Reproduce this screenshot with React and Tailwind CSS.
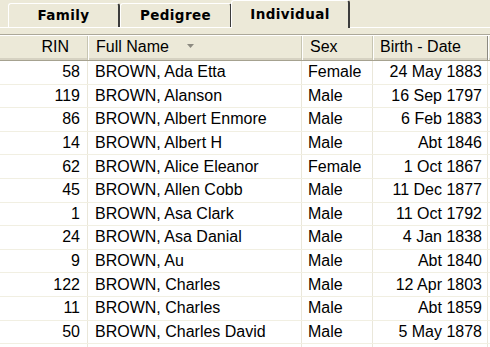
const rows = [
  ['58', 'BROWN, Ada Etta', 'Female', '24 May 1883'],
  ['119', 'BROWN, Alanson', 'Male', '16 Sep 1797'],
  ['86', 'BROWN, Albert Enmore', 'Male', '6 Feb 1883'],
  ['14', 'BROWN, Albert H', 'Male', 'Abt 1846'],
  ['62', 'BROWN, Alice Eleanor', 'Female', '1 Oct 1867'],
  ['45', 'BROWN, Allen Cobb', 'Male', '11 Dec 1877'],
  ['1', 'BROWN, Asa Clark', 'Male', '11 Oct 1792'],
  ['24', 'BROWN, Asa Danial', 'Male', '4 Jan 1838'],
  ['9', 'BROWN, Au', 'Male', 'Abt 1840'],
  ['122', 'BROWN, Charles', 'Male', '12 Apr 1803'],
  ['11', 'BROWN, Charles', 'Male', 'Abt 1859'],
  ['50', 'BROWN, Charles David', 'Male', '5 May 1878'],
  ['', '', '', ''],
]

function Tab({ label, active }) {
  if (active) {
    return (
      <div className="relative z-10 -ml-[1px] flex h-[28px] w-[119px] items-center justify-center rounded-t-[3px] border-l border-t border-white border-r-2 border-r-[#3c3c3c] bg-[#ECE9D8] pb-[1px]">
        {label}
      </div>
    )
  }
  return (
    <div className="flex h-[24px] w-[112px] items-center justify-center rounded-t-[3px] border-l border-t border-white border-r-2 border-r-[#3c3c3c] bg-[#ECE9D8]">
      {label}
    </div>
  )
}

export default function App() {
  return (
    <div className="h-[347px] w-[490px] overflow-hidden bg-white font-['Liberation_Sans',Arial,sans-serif] text-[16px] text-black">
      {/* tab strip */}
      <div className="relative h-[34px] bg-[#ECE9D8]">
        <div className="absolute left-0 right-0 top-[27px] h-px bg-white" />
        <div className="flex items-start pl-[8px] font-['DejaVu_Sans',sans-serif] text-[13.5px] font-bold tracking-[0.4px]">
          <div className="mt-[3px] flex">
            <Tab label="Family" />
            <Tab label="Pedigree" />
          </div>
          <Tab label="Individual" active />
        </div>
      </div>

      {/* list */}
      <div className="border-t border-[#ACA899]">
        <div className="flex h-[26px] border-b border-[#A6A290] border-t border-t-white bg-[#ECE9D8] shadow-[inset_0_-2px_0_#D6D2C2]">
          <div className="flex w-[88px] items-center justify-end border-r border-[#C7C5B2] pr-[18px] pb-[2px]">RIN</div>
          <div className="relative flex w-[214px] items-center border-l border-white border-r border-r-[#C7C5B2] pl-[7px] pb-[2px]">
            Full Name
            <svg className="absolute left-[98px] top-[8px]" width="7" height="4" viewBox="0 0 7 4">
              <path d="M0 0h7L3.5 4z" fill="#8c8a80" />
            </svg>
          </div>
          <div className="flex w-[71px] items-center border-l border-white border-r border-r-[#C7C5B2] pl-[7px] pb-[2px]">Sex</div>
          <div className="flex w-[115px] items-center border-l border-white border-r border-r-[#8c8a80] pl-[6px] pb-[2px]">Birth - Date</div>
          <div className="flex-1 border-l border-white" />
        </div>

        {rows.map((r, i) => (
          <div key={i} className="flex h-[23.6px] border-b border-[#F1EFE2]">
            <div className="flex w-[88px] items-center justify-end border-r border-[#EAE7DA] pr-[7px]">{r[0]}</div>
            <div className="flex w-[214px] items-center border-r border-[#EAE7DA] pl-[7px]">{r[1]}</div>
            <div className="flex w-[71px] items-center border-r border-[#EAE7DA] pl-[6px]">{r[2]}</div>
            <div className="flex w-[115px] items-center justify-end border-r border-[#EAE7DA] pr-[5px]">{r[3]}</div>
          </div>
        ))}
      </div>
    </div>
  )
}
